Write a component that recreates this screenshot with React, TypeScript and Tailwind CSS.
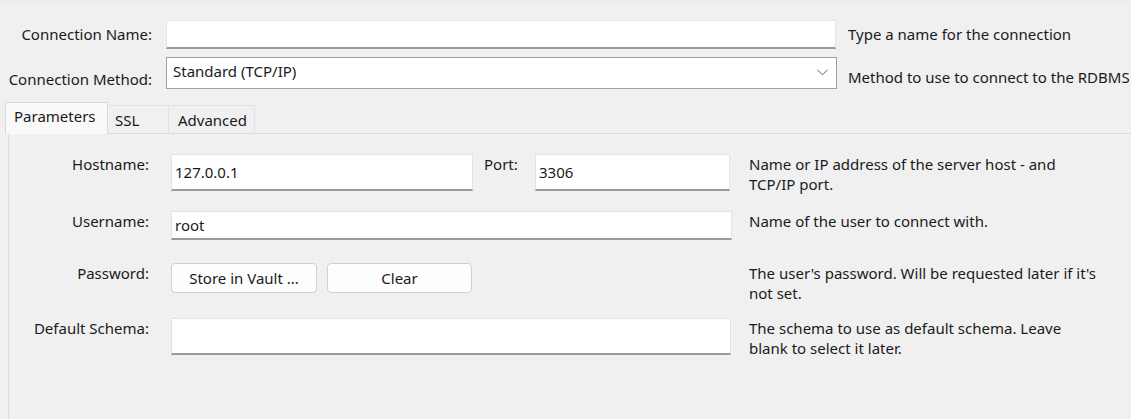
import React from 'react'

const font = { fontFamily: '"Noto Sans", "Open Sans", sans-serif' }

function TextBox({ value, className = '' }: { value?: string; className?: string }) {
  return (
    <div
      className={`flex items-start border border-[#e3e3e3] border-b-2 border-b-[#9a9a9a] bg-white pl-[3px] pt-[7px] text-[15px] leading-[20px] text-[#1a1a1a] ${className}`}
    >
      {value}
    </div>
  )
}

function Button({ label, className = '' }: { label: string; className?: string }) {
  return (
    <div
      className={`flex h-[30px] items-center justify-center rounded-[4px] border border-[#d0d0d0] bg-[#fdfdfd] text-[15px] text-[#1a1a1a] ${className}`}
    >
      {label}
    </div>
  )
}

function Row({
  label,
  children,
  help,
  className = '',
}: {
  label: string
  children: React.ReactNode
  help: React.ReactNode
  className?: string
}) {
  return (
    <div className={`flex items-start ${className}`}>
      <div className="w-[140px] shrink-0 text-right text-[15px] leading-[20px] text-[#1a1a1a]">{label}</div>
      <div className="ml-[22px] flex w-[561px] shrink-0 items-start">{children}</div>
      <div className="ml-[17px] w-[380px] shrink-0 text-[15px] leading-[20px] text-[#1a1a1a]">{help}</div>
    </div>
  )
}

export default function App() {
  return (
    <div style={font} className="h-[419px] w-[1131px] overflow-hidden border-t-[3px] border-t-[#ececf0] bg-[#f0f0f0]">
      {/* connection name */}
      <div className="mt-[17px] flex items-center">
        <div className="w-[152px] shrink-0 whitespace-nowrap text-right text-[15px] text-[#1a1a1a]">Connection Name:</div>
        <div className="ml-[14px] h-[29px] w-[670px] shrink-0 border border-[#e3e3e3] border-b-2 border-b-[#9a9a9a] bg-white" />
        <div className="ml-[12px] whitespace-nowrap text-[15px] text-[#1a1a1a]">Type a name for the connection</div>
      </div>

      {/* connection method */}
      <div className="mt-[8px] flex h-[32px] items-stretch">
        <div className="flex w-[152px] shrink-0 items-end justify-end whitespace-nowrap text-[15px] leading-[20px] text-[#1a1a1a]">
          Connection Method:
        </div>
        <div className="ml-[14px] flex w-[671px] shrink-0 items-center justify-between border border-[#a0a0a0] bg-white pl-[6px] pr-[8px] text-[15px] text-[#1a1a1a]">
          <span className="-mt-[3px]">Standard (TCP/IP)</span>
          <svg width="11" height="7" viewBox="0 0 11 7" className="mb-[2px]">
            <path d="M0.5 0.8 L5.5 5.8 L10.5 0.8" fill="none" stroke="#5c5c5c" strokeWidth="1" />
          </svg>
        </div>
        <div className="ml-[11px] flex items-center whitespace-nowrap pt-[8px] text-[15px] leading-[20px] text-[#1a1a1a]">
          Method to use to connect to the RDBMS
        </div>
      </div>

      {/* tabs */}
      <div className="mt-[13px] flex items-end pl-[5px]">
        <div className="relative z-10 -mb-px flex h-[32px] w-[103px] items-start border border-b-0 border-[#dadada] bg-[#f9f9f9] pl-[8px] pt-[2px] text-[15px] text-[#1a1a1a]">
          Parameters
        </div>
        <div className="flex h-[28px] w-[61px] items-start border-t border-r border-[#e2e2e2] pl-[7px] pt-[3px] text-[15px] text-[#1a1a1a]">
          SSL
        </div>
        <div className="flex h-[28px] w-[86px] items-start border-t border-r border-[#e2e2e2] pl-[9px] pt-[3px] text-[15px] text-[#1a1a1a]">
          Advanced
        </div>
      </div>

      {/* panel */}
      <div className="ml-[8px] h-[300px] border-l border-t border-[#dcdcdc] bg-[#f0f0f0] pt-[20px]">
        <Row
          label="Hostname:"
          help={
            <>
              Name or IP address of the server host - and
              <br />
              TCP/IP port.
            </>
          }
        >
          <TextBox value="127.0.0.1" className="h-[37px] w-[302px]" />
          <div className="ml-[11px] w-[51px] text-[15px] leading-[20px] text-[#1a1a1a]">Port:</div>
          <TextBox value="3306" className="h-[37px] w-[195px]" />
        </Row>

        <Row className="mt-[17px]" label="Username:" help="Name of the user to connect with.">
          <TextBox value="root" className="h-[29px] w-[561px] !pt-[3px]" />
        </Row>

        <Row
          className="mt-[23px]"
          label="Password:"
          help={
            <>
              The user&apos;s password. Will be requested later if it&apos;s
              <br />
              not set.
            </>
          }
        >
          <div className="flex">
            <Button label="Store in Vault ..." className="w-[146px]" />
            <Button label="Clear" className="ml-[10px] w-[145px]" />
          </div>
        </Row>

        <Row
          className="mt-[15px]"
          label="Default Schema:"
          help={
            <>
              The schema to use as default schema. Leave
              <br />
              blank to select it later.
            </>
          }
        >
          <TextBox className="h-[37px] w-[560px]" />
        </Row>
      </div>
    </div>
  )
}
